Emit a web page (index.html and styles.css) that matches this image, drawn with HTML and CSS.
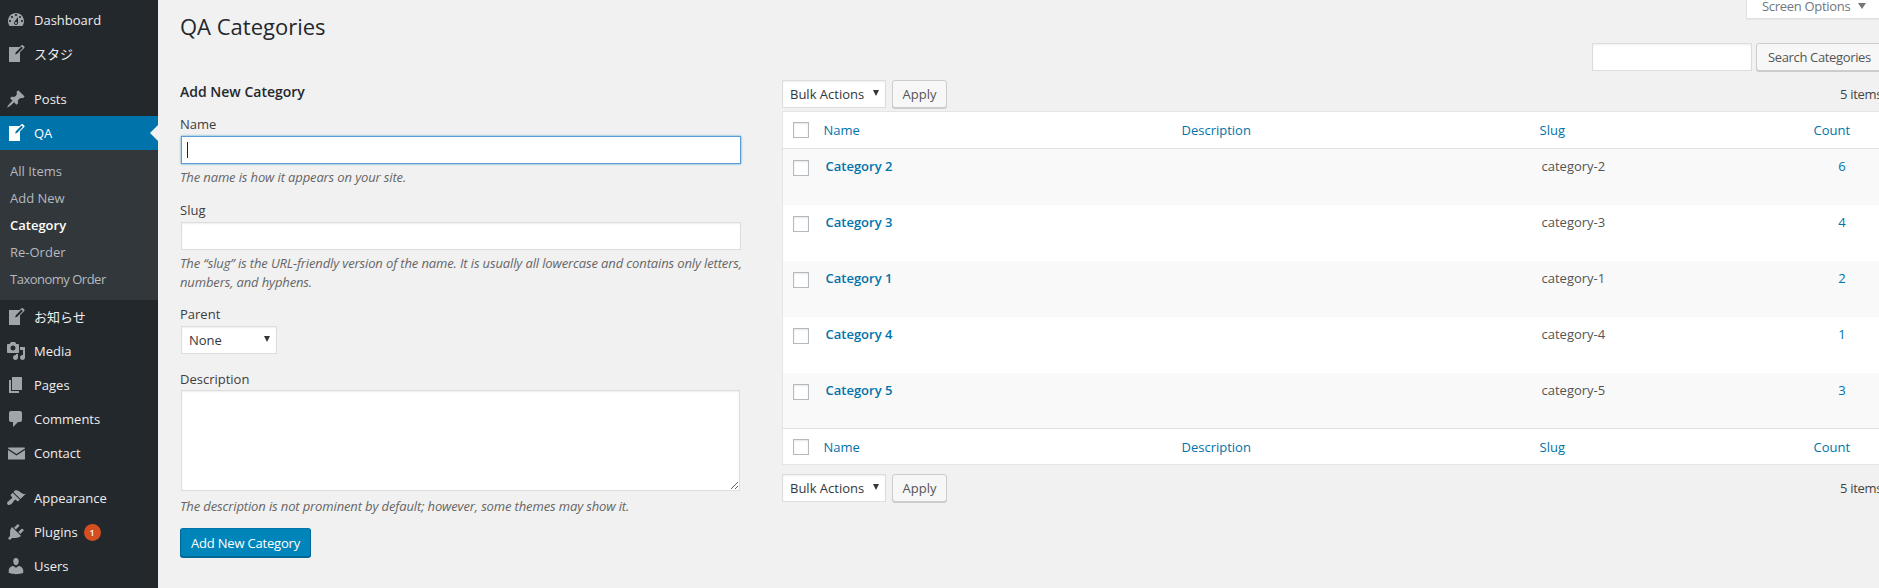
FILE: index.html
```html
<!DOCTYPE html>
<html lang="en">
<head>
<meta charset="utf-8">
<title>QA Categories</title>
<link rel="stylesheet" href="styles.css">
</head>
<body>
<div class="app">
  <nav class="sidebar">
    <ul class="menu">
      <li class="item"><svg class="icon" viewBox="0 0 20 20"><path d="M3.76 16h12.48c1.1-1.37 1.76-3.11 1.76-5 0-4.42-3.58-8-8-8s-8 3.58-8 8c0 1.89.66 3.63 1.76 5zM10 4c.55 0 1 .45 1 1s-.45 1-1 1-1-.45-1-1 .45-1 1-1zM6 6c.55 0 1 .45 1 1s-.45 1-1 1-1-.45-1-1 .45-1 1-1zm8 0c.55 0 1 .45 1 1s-.45 1-1 1-1-.45-1-1 .45-1 1-1zm-5.37 5.55L12 7v6c0 1.1-.9 2-2 2s-2-.9-2-2c0-.57.24-1.08.63-1.45zM4 10c.55 0 1 .45 1 1s-.45 1-1 1-1-.45-1-1 .45-1 1-1zm12 0c.55 0 1 .45 1 1s-.45 1-1 1-1-.45-1-1 .45-1 1-1zm-5 3c0-.55-.45-1-1-1s-1 .45-1 1 .45 1 1 1 1-.45 1-1z"/></svg>Dashboard</li>
      <li class="item"><svg class="icon" viewBox="0 0 20 20"><path d="M16.89 1.2l1.41 1.41c.39.39.39 1.02 0 1.41L14 8.33V18H3V3h10.67l1.8-1.8c.4-.39 1.03-.4 1.42 0zm-5.66 8.48l5.66-5.66-1.41-1.41-5.66 5.66-.71 2.12z"/></svg>スタジ</li>
      <li class="item group-start"><svg class="icon" viewBox="0 0 20 20"><path d="M10.44 3.02l1.82-1.82 6.36 6.35-1.83 1.82c-1.05-.68-2.48-.57-3.41.36l-.75.75c-.92.93-1.04 2.35-.35 3.41l-1.83 1.82-2.41-2.41-2.8 2.79c-.42.42-3.38 2.71-3.8 2.29s1.86-3.39 2.28-3.81l2.79-2.79L4.1 9.36l1.83-1.82c1.05.69 2.48.57 3.4-.36l.75-.75c.93-.92 1.05-2.35.36-3.41z"/></svg>Posts</li>
      <li class="item current"><svg class="icon" viewBox="0 0 20 20"><path d="M16.89 1.2l1.41 1.41c.39.39.39 1.02 0 1.41L14 8.33V18H3V3h10.67l1.8-1.8c.4-.39 1.03-.4 1.42 0zm-5.66 8.48l5.66-5.66-1.41-1.41-5.66 5.66-.71 2.12z"/></svg>QA</li>
      <li class="submenu">
        <ul>
          <li>All Items</li>
          <li>Add New</li>
          <li class="sub-current">Category</li>
          <li>Re-Order</li>
          <li class="sub-tight">Taxonomy Order</li>
        </ul>
      </li>
      <li class="item"><svg class="icon" viewBox="0 0 20 20"><path d="M16.89 1.2l1.41 1.41c.39.39.39 1.02 0 1.41L14 8.33V18H3V3h10.67l1.8-1.8c.4-.39 1.03-.4 1.42 0zm-5.66 8.48l5.66-5.66-1.41-1.41-5.66 5.66-.71 2.12z"/></svg>お知らせ</li>
      <li class="item"><svg class="icon" viewBox="0 0 20 20"><path d="M13 11V4c0-.55-.45-1-1-1h-1.67L9 1H5L3.67 3H2c-.55 0-1 .45-1 1v7c0 .55.45 1 1 1h10c.55 0 1-.45 1-1zM7 4.5c1.38 0 2.5 1.12 2.5 2.5S8.38 9.5 7 9.5 4.5 8.38 4.5 7 5.62 4.5 7 4.5zM14 6h5v10.5c0 1.38-1.12 2.5-2.5 2.5S14 17.88 14 16.5s1.12-2.5 2.5-2.5c.17 0 .34.02.5.05V9h-3V6zm-4 8.05V13h2v3.5c0 1.38-1.12 2.5-2.5 2.5S7 17.88 7 16.5 8.12 14 9.5 14c.17 0 .34.02.5.05z"/></svg>Media</li>
      <li class="item"><svg class="icon" viewBox="0 0 20 20"><path d="M6 15V2h10v13H6zm-1 1h8v2H3V5h2v11z"/></svg>Pages</li>
      <li class="item"><svg class="icon" viewBox="0 0 20 20"><path d="M5 2h9c1.1 0 2 .9 2 2v7c0 1.1-.9 2-2 2h-2l-5 5v-5H5c-1.1 0-2-.9-2-2V4c0-1.1.9-2 2-2z"/></svg>Comments</li>
      <li class="item"><svg class="icon" viewBox="0 0 20 20"><path d="M2.6 4.5h15.8c.3 0 .6.3.6.6v.3l-8.500 5.600L2 5.400v-.3c0-.3.3-.6.6-.6zM2 6.900l8.500 5.500L19 6.900v9c0 .3-.3.6-.6.6H2.600c-.3 0-.6-.3-.6-.6z"/></svg>Contact</li>
      <li class="item group-start"><svg class="icon" viewBox="0 0 20 20"><path d="M14.48 11.06L7.41 3.99l1.5-1.5c.5-.56 2.3-.47 3.51.32 1.21.8 1.43 1.28 2.91 2.1 1.18.64 2.45 1.26 4.45.85zm-.71.71L6.7 4.7 4.93 6.47c-.39.39-.39 1.02 0 1.41l1.06 1.06c.39.39.39 1.03 0 1.42-.6.6-1.43 1.11-2.21 1.69-.35.26-.7.53-1.01.84C1.43 13.23.4 15.2 1.6 16.4c1.2 1.2 3.16.18 4.5-1.17.31-.31.58-.66.85-1.02.57-.78 1.08-1.6 1.69-2.21.39-.39 1.02-.39 1.41 0l1.06 1.06c.39.39 1.02.39 1.41 0z"/></svg>Appearance</li>
      <li class="item"><svg class="icon" viewBox="0 0 20 20"><path d="M13.11 4.36L9.87 7.6 8 5.73l3.24-3.24c.35-.34 1.05-.2 1.56.32.52.51.66 1.21.31 1.55zm-8 1.77l.91-1.12 9.01 9.01-1.19.84c-.71.71-2.63 1.16-3.82 1.16H6.14L4.9 17.26c-.59.59-1.54.59-2.12 0-.59-.58-.59-1.53 0-2.12l1.24-1.24v-3.88c0-1.13.4-3.19 1.09-3.89zm7.26 3.97l3.24-3.24c.34-.35 1.04-.21 1.55.31.52.51.66 1.21.31 1.55l-3.24 3.25z"/></svg>Plugins<span class="badge">1</span></li>
      <li class="item"><svg class="icon" viewBox="0 0 20 20"><path d="M10 9.25c-2.27 0-2.73-3.44-2.73-3.44C7 4.02 7.82 2 9.97 2c2.16 0 2.98 2.02 2.71 3.81 0 0-.41 3.44-2.68 3.44zm0 2.57L12.72 10c2.39 0 4.52 2.33 4.52 4.53v2.49s-3.65 1.13-7.24 1.13c-3.65 0-7.24-1.13-7.24-1.13v-2.49c0-2.25 1.94-4.48 4.47-4.48z"/></svg>Users</li>
    </ul>
  </nav>

  <main class="content">
    <div class="screen-options">Screen Options <span class="tri"></span></div>
    <h1 class="title">QA Categories</h1>

    <div class="search-row">
      <input class="control search-input" type="text" aria-label="Search">
      <button class="btn search-btn" type="button">Search Categories</button>
    </div>

    <div class="columns">
      <section class="col-form">
        <h2 class="form-title">Add New Category</h2>
        <div class="field">
          <label class="label">Name</label>
          <div class="caret-wrap"><input class="control wide focused" type="text"></div>
          <p class="help">The name is how it appears on your site.</p>
        </div>
        <div class="field field-slug">
          <label class="label">Slug</label>
          <input class="control wide" type="text">
          <p class="help">The “slug” is the URL-friendly version of the name. It is usually all lowercase and contains only letters, numbers, and hyphens.</p>
        </div>
        <div class="field field-parent">
          <label class="label">Parent</label>
          <div class="select parent-select">None</div>
        </div>
        <div class="field field-desc">
          <label class="label">Description</label>
          <textarea class="control area"></textarea>
          <p class="help">The description is not prominent by default; however, some themes may show it.</p>
        </div>
        <button class="btn primary" type="button">Add New Category</button>
      </section>

      <section class="col-list">
        <div class="toolbar top">
          <div class="select bulk">Bulk Actions</div>
          <button class="btn apply" type="button">Apply</button>
          <span class="count-items">5 items</span>
        </div>
        <table class="list">
          <colgroup><col class="c-cb"><col class="c-name"><col class="c-desc"><col class="c-slug"><col class="c-count"></colgroup>
          <thead>
            <tr><th class="cb"><input class="check" type="checkbox"></th><th>Name</th><th>Description</th><th>Slug</th><th class="th-count">Count</th></tr>
          </thead>
          <tbody>
            <tr><td class="cb"><input class="check" type="checkbox"></td><td class="name">Category 2</td><td></td><td class="slug">category-2</td><td class="num">6</td></tr>
            <tr><td class="cb"><input class="check" type="checkbox"></td><td class="name">Category 3</td><td></td><td class="slug">category-3</td><td class="num">4</td></tr>
            <tr><td class="cb"><input class="check" type="checkbox"></td><td class="name">Category 1</td><td></td><td class="slug">category-1</td><td class="num">2</td></tr>
            <tr><td class="cb"><input class="check" type="checkbox"></td><td class="name">Category 4</td><td></td><td class="slug">category-4</td><td class="num">1</td></tr>
            <tr><td class="cb"><input class="check" type="checkbox"></td><td class="name">Category 5</td><td></td><td class="slug">category-5</td><td class="num">3</td></tr>
          </tbody>
          <tfoot>
            <tr><th class="cb"><input class="check" type="checkbox"></th><th>Name</th><th>Description</th><th>Slug</th><th class="th-count">Count</th></tr>
          </tfoot>
        </table>
        <div class="toolbar bottom">
          <div class="select bulk">Bulk Actions</div>
          <button class="btn apply" type="button">Apply</button>
          <span class="count-items">5 items</span>
        </div>
      </section>
    </div>
  </main>
</div>
</body>
</html>
```
FILE: styles.css
```css
* { box-sizing: border-box; }
html, body { margin: 0; height: 588px; overflow: hidden; }
body {
  background: #f1f1f1;
  color: #444;
  font-family: "Open Sans", "Noto Sans CJK JP", sans-serif;
  font-size: 13px;
  line-height: 18px;
}
.app { display: flex; width: 1879px; height: 588px; overflow: hidden; }

/* sidebar */
.sidebar { width: 158px; flex: none; background: #23282d; color: #eee; padding-top: 3px; }
.menu, .submenu ul { list-style: none; margin: 0; padding: 0; }
.item { display: flex; align-items: center; height: 34px; padding-left: 34px; position: relative; }
.group-start { margin-top: 11px; }
.icon { position: absolute; left: 6px; top: 7px; width: 20px; height: 20px; fill: #a0a5aa; }
.current { background: #0073aa; color: #fff; }
.current .icon { fill: #fff; }
.current::after {
  content: ""; position: absolute; right: 0; top: 50%; margin-top: -8px;
  border: 8px solid transparent; border-right-color: #f1f1f1; border-left-width: 0;
}
.submenu { background: #32373c; padding: 8px 0 7px 10px; height: 150px; color: #b4b9be; }
.submenu li { height: 27px; line-height: 27px; }
.sub-current { color: #fff; font-weight: 600; }
.submenu .sub-tight { letter-spacing: -.5px; }
.badge {
  width: 17px; height: 17px; border-radius: 50%; background: #d54e21; color: #fff;
  font-size: 9px; font-weight: 600; line-height: 17px; text-align: center; margin-left: 6px;
}

/* content */
.content { flex: none; width: 1721px; padding-left: 22px; position: relative; }
.title { margin: 0; height: 43px; padding-top: 9px; font-size: 22px; line-height: 34px; font-weight: 400; color: #23282d; }
.screen-options {
  position: absolute; right: 0; top: -6px; width: 133px; height: 25px; padding-left: 15px;
  background: #fff; border: 1px solid #e1e1e1; border-top: 0; border-right: 0;
  line-height: 24px; letter-spacing: -.3px; color: #72777c; box-shadow: 0 1px 1px rgba(0,0,0,.04);
}
.tri { display: inline-block; margin-left: 5px; border: 4.5px solid transparent; border-top: 6px solid #72777c; border-bottom: 0; vertical-align: 2px; }
.search-row { display: flex; justify-content: flex-end; gap: 4px; height: 28px; margin-right: -10px; }
.control { border: 1px solid #ddd; background: #fff; box-shadow: inset 0 1px 2px rgba(0,0,0,.07); display: block; margin: 0; outline: 0; font: inherit; }
.search-input { width: 160px; height: 28px; }
.btn {
  font: inherit; height: 28px; margin: 0; padding: 0 11px; border: 1px solid #ccc; border-radius: 3px;
  background: #f7f7f7; color: #555; box-shadow: 0 1px 0 #ccc; line-height: 24px; white-space: nowrap;
}
.search-btn { width: 133px; flex: none; text-align: left; letter-spacing: -.35px; }
.columns { display: flex; }

/* form */
.col-form { width: 602px; flex: none; }
.form-title { margin: 12px 0 14px; font-size: 14px; line-height: 18px; font-weight: 600; color: #23282d; }
.field { margin-bottom: 14px; }
.field-slug { margin-bottom: 13px; }
.field-parent { margin-bottom: 16px; }
.field-desc { margin-bottom: 12px; }
.label { display: block; height: 18px; margin-bottom: 3px; color: #3d3d3d; }
.field-desc .label { margin-bottom: 2px; }
.wide { width: 560px; height: 28px; margin-left: 1px; }
.focused { border-color: #5b9dd9; box-shadow: 0 0 2px rgba(30,140,190,.8); }
.caret-wrap { position: relative; }
.caret-wrap::after { content: ""; position: absolute; left: 7px; top: 6px; width: 1px; height: 16px; background: #222; }
.help { margin: 4px 0 0; color: #666; font-style: italic; width: 575px; line-height: 19px; letter-spacing: -.13px; }
.select {
  position: relative; height: 28px; background: #fff; border: 1px solid #ddd; padding-left: 7px;
  line-height: 27px; color: #32373c; box-shadow: inset 0 1px 2px rgba(0,0,0,.07);
}
.select::after {
  content: ""; position: absolute; right: 6px; top: 9px;
  border: 3.5px solid transparent; border-top: 6px solid #32373c; border-bottom: 0;
}
.parent-select { width: 96px; margin-left: 1px; }
.area { width: 559px; height: 101px; margin-left: 1px; }
.field-desc .help { margin-top: 6px; }
.primary {
  display: block; width: 131px; height: 29px; padding: 0; text-align: center; color: #fff; letter-spacing: -.2px;
  background: #0085ba; border-color: #0073aa #006799 #006799; box-shadow: 0 1px 0 #006799;
}

/* list */
.col-list { width: 1150px; flex: none; padding-top: 9px; }
.toolbar { display: flex; gap: 6px; height: 28px; }
.toolbar.top { margin-bottom: 3px; }
.toolbar.bottom { margin-top: 9px; }
.bulk { width: 104px; }
.apply { width: 55px; padding: 0; }
.count-items { margin-left: auto; width: 92px; padding-top: 5px; white-space: nowrap; letter-spacing: -.3px; }
.list { width: 1098px; table-layout: fixed; border-collapse: collapse; background: #fff; border: 1px solid #e5e5e5; border-right: 0; }
.c-cb { width: 31px; } .c-name, .c-desc { width: 358px; } .c-slug { width: 274px; } .c-count { width: 77px; }
th { font-weight: 400; text-align: left; height: 36px; padding: 0 10px; color: #0073aa; }
thead th { height: 37px; border-bottom: 1px solid #e1e1e1; }
tfoot th { border-top: 1px solid #e1e1e1; }
td { height: 56px; padding: 8px 10px 0; vertical-align: top; }
.cb { padding: 0 0 0 10px; }
td.cb { padding-top: 11px; }
.check { appearance: none; display: block; margin: 0; width: 16px; height: 16px; background: #fff; border: 1px solid #b4b9be; box-shadow: inset 0 1px 2px rgba(0,0,0,.1); }
tbody tr:nth-child(odd) { background: #f9f9f9; }
.name { padding-left: 12px; color: #0073aa; font-weight: 600; }
.slug { padding-left: 12px; color: #555; }
.num { text-align: center; color: #0073aa; padding: 8px 0 0; }
```
